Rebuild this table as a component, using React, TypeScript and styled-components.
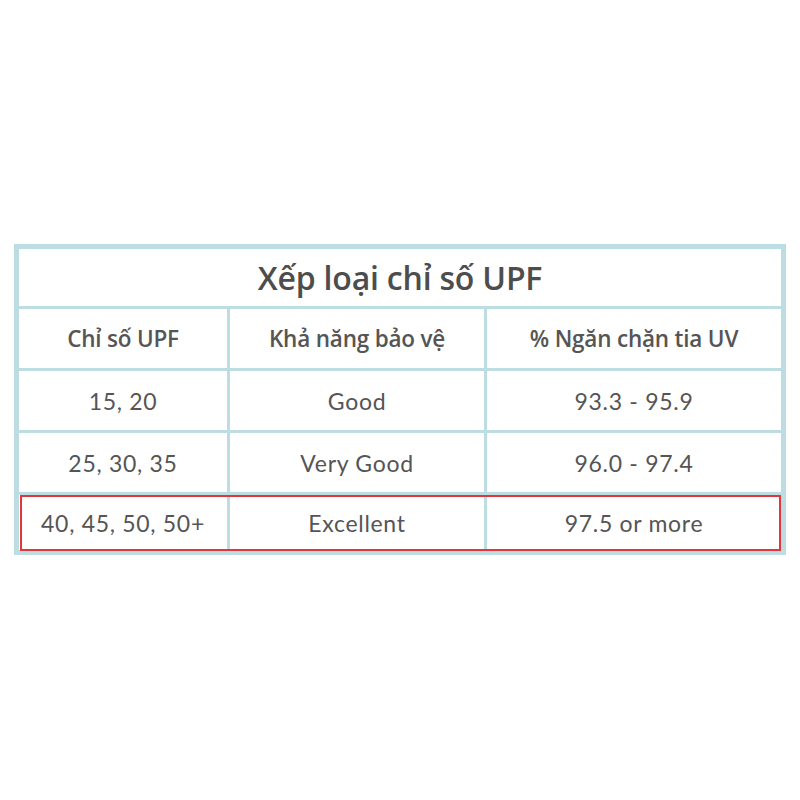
import React from 'react';
import styled, { createGlobalStyle } from 'styled-components';

const GlobalStyle = createGlobalStyle`
  html, body {
    margin: 0;
    padding: 0;
    background: #ffffff;
  }
`;

const Page = styled.div`
  width: 800px;
  height: 800px;
  padding: 244px 14px 0 14px;
  box-sizing: border-box;
  background: #ffffff;
`;

const Table = styled.div`
  display: flex;
  flex-direction: column;
  gap: 3px;
  border: 5px solid #bcdde2;
  background: #bcdde2;
`;

const TitleCell = styled.div`
  height: 57px;
  background: #ffffff;
  display: flex;
  align-items: center;
  justify-content: center;
  font-family: "Open Sans", "Noto Sans", sans-serif;
  font-weight: 600;
  font-size: 32px;
  letter-spacing: -0.2px;
  color: #4d4d4d;
`;

const Row = styled.div<{ $highlight?: boolean }>`
  position: relative;
  display: grid;
  grid-template-columns: 208px 254px 294px;
  gap: 3px;
  height: ${(p) => (p.$highlight ? '55px' : '59px')};

  ${(p) =>
    p.$highlight &&
    `
    &::after {
      content: '';
      position: absolute;
      top: 0;
      left: 1px;
      right: 0;
      bottom: -1px;
      border: 2px solid #e2363c;
      pointer-events: none;
    }
  `}
`;

const Cell = styled.div<{ $head?: boolean }>`
  background: #ffffff;
  display: flex;
  align-items: center;
  justify-content: center;
  color: #555555;
  font-family: ${(p) => (p.$head ? '"Open Sans", "Noto Sans", sans-serif' : 'Lato, "Noto Sans", sans-serif')};
  font-weight: ${(p) => (p.$head ? 600 : 400)};
  font-size: ${(p) => (p.$head ? '22.5px' : '23px')};
  letter-spacing: ${(p) => (p.$head ? '-0.2px' : '0.7px')};
`;

const rows = [
  ['15, 20', 'Good', '93.3 - 95.9'],
  ['25, 30, 35', 'Very Good', '96.0 - 97.4'],
  ['40, 45, 50, 50+', 'Excellent', '97.5 or more'],
];

export default function App() {
  return (
    <>
      <GlobalStyle />
      <Page>
        <Table>
          <TitleCell>Xếp loại chỉ số UPF</TitleCell>
          <Row>
            <Cell $head>Chỉ số UPF</Cell>
            <Cell $head>Khả năng bảo vệ</Cell>
            <Cell $head>% Ngăn chặn tia UV</Cell>
          </Row>
          {rows.map((r, i) => (
            <Row key={i} $highlight={i === rows.length - 1}>
              {r.map((c, j) => (
                <Cell key={j}>{c}</Cell>
              ))}
            </Row>
          ))}
        </Table>
      </Page>
    </>
  );
}
